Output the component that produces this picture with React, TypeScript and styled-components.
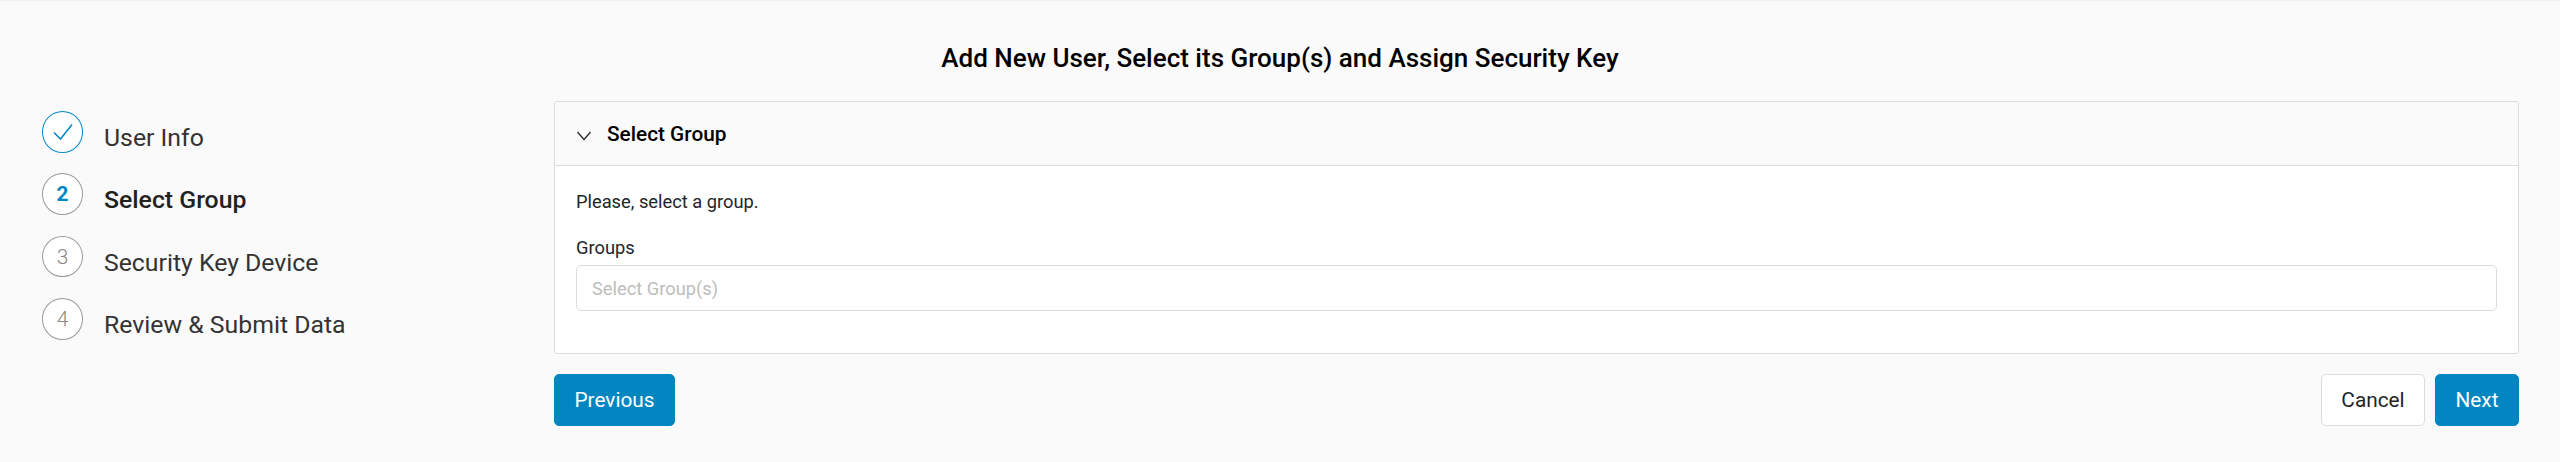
import React from "react";
import styled, { createGlobalStyle } from "styled-components";

const Global = createGlobalStyle`
  html, body { margin: 0; padding: 0; background: #fafafa; }
  body { font-family: Roboto, "Liberation Sans", sans-serif; color: #212529; }
`;

const Page = styled.div`
  height: 462px;
  box-sizing: border-box;
  border-top: 1px solid #f0f0f0;
  background: #fafafa;
  overflow: hidden;
`;

const Title = styled.h1`
  margin: 0;
  padding-top: 42px;
  height: 58px;
  box-sizing: content-box;
  font-size: 26px;
  line-height: 30px;
  font-weight: 500;
  text-align: center;
  color: #000;
`;

const Columns = styled.div`
  display: flex;
  padding: 0 41px 0 42px;
`;

const Steps = styled.ol`
  list-style: none;
  margin: 10px 0 0;
  padding: 0;
  width: 512px;
  flex: none;
  display: flex;
  flex-direction: column;
  gap: 20.8px;
`;

const Step = styled.li`
  display: flex;
  align-items: flex-start;
  height: 41.6px;
  gap: 21px;
`;

const Circle = styled.span<{ $done?: boolean; $active?: boolean }>`
  width: 41px;
  height: 41.6px;
  box-sizing: border-box;
  border-radius: 50%;
  border: 1px solid ${(p) => (p.$done ? "#0a8ac6" : "#999")};
  background: #fff;
  display: flex;
  align-items: center;
  justify-content: center;
  font-size: 20.8px;
  font-weight: ${(p) => (p.$active ? 700 : 300)};
  color: ${(p) => (p.$active ? "#0286c2" : "#888")};
  flex: none;
`;

const StepLabel = styled.span<{ $active?: boolean }>`
  font-size: 24.8px;
  line-height: 30px;
  margin-top: 12px;
  font-weight: ${(p) => (p.$active ? 500 : 400)};
  color: ${(p) => (p.$active ? "#212121" : "#333")};
  white-space: nowrap;
`;

const Main = styled.div`
  flex: 1;
  min-width: 0;
`;

const Panel = styled.section`
  height: 253px;
  box-sizing: border-box;
  border: 1px solid #dcdcdc;
  border-radius: 3px;
  background: #fff;
`;

const PanelHeader = styled.header`
  height: 64px;
  box-sizing: border-box;
  background: #fafafa;
  border-bottom: 1px solid #dcdcdc;
  border-radius: 3px 3px 0 0;
  display: flex;
  align-items: center;
  padding-left: 22px;
  gap: 16px;
  font-size: 20.8px;
  font-weight: 500;
  color: #000;
`;

const Chevron = styled.svg`
  width: 14px;
  height: 14px;
  flex: none;
`;

const PanelBody = styled.div`
  padding: 23px 21px 0;
`;

const Hint = styled.p`
  margin: 0;
  font-size: 18.3px;
  line-height: 26px;
  color: #212529;
`;

const FieldLabel = styled.label`
  display: block;
  margin-top: 21px;
  font-size: 18.3px;
  line-height: 24px;
  color: #212529;
`;

const SelectBox = styled.div`
  margin-top: 5px;
  height: 46px;
  box-sizing: border-box;
  border: 1px solid #dcdcdc;
  border-radius: 5px;
  background: #fff;
  display: flex;
  align-items: center;
  padding-left: 15px;
  font-size: 18.3px;
  color: #bdbdbd;
`;

const Actions = styled.div`
  display: flex;
  justify-content: space-between;
  margin-top: 20px;
`;

const ButtonGroup = styled.div`
  display: flex;
  gap: 10px;
`;

const Button = styled.button<{ $primary?: boolean; $w: number }>`
  width: ${(p) => p.$w}px;
  height: 52px;
  box-sizing: border-box;
  padding: 0;
  border-radius: 5px;
  font-family: inherit;
  font-size: 20.8px;
  border: 1px solid ${(p) => (p.$primary ? "#0286c2" : "#dcdcdc")};
  background: ${(p) => (p.$primary ? "#0286c2" : "#fff")};
  color: ${(p) => (p.$primary ? "#fff" : "#212529")};
`;

export default function App() {
  return (
    <Page>
      <Global />
      <Title>Add New User, Select its Group(s) and Assign Security Key</Title>
      <Columns>
        <Steps>
          <Step>
            <Circle $done>
              <svg width="20" height="18" viewBox="0 0 20 18" fill="none" stroke="#0286c2" strokeWidth="1.5">
                <path d="M1 9.5 L7.5 16 L19 1.5" />
              </svg>
            </Circle>
            <StepLabel>User Info</StepLabel>
          </Step>
          <Step>
            <Circle $active>2</Circle>
            <StepLabel $active>Select Group</StepLabel>
          </Step>
          <Step>
            <Circle>3</Circle>
            <StepLabel>Security Key Device</StepLabel>
          </Step>
          <Step>
            <Circle>4</Circle>
            <StepLabel>Review &amp; Submit Data</StepLabel>
          </Step>
        </Steps>
        <Main>
          <Panel>
            <PanelHeader>
              <Chevron viewBox="0 0 14 14" fill="none" stroke="#222" strokeWidth="1.2">
                <path d="M0.5 5 L7 12.5 L13.5 5" />
              </Chevron>
              Select Group
            </PanelHeader>
            <PanelBody>
              <Hint>Please, select a group.</Hint>
              <FieldLabel>Groups</FieldLabel>
              <SelectBox>Select Group(s)</SelectBox>
            </PanelBody>
          </Panel>
          <Actions>
            <Button $primary $w={121}>Previous</Button>
            <ButtonGroup>
              <Button $w={104}>Cancel</Button>
              <Button $primary $w={84}>Next</Button>
            </ButtonGroup>
          </Actions>
        </Main>
      </Columns>
    </Page>
  );
}
